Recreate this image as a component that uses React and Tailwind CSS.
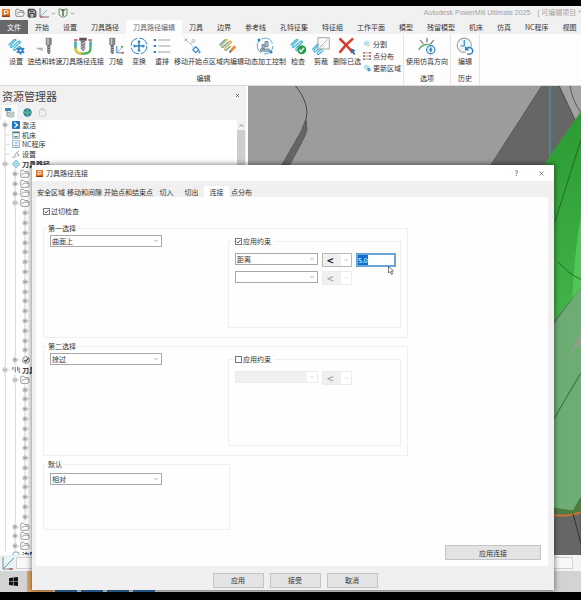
import { useEffect, useRef } from "react";
import { ChevronDown, ChevronUp, Clipboard, FolderOpen, Save, X } from "lucide-react";

const TABS = [
  "开始", "设置", "刀具路径", "刀具路径编辑", "刀具", "边界", "参考线", "孔特征集",
  "特征组", "工作平面", "模型", "残留模型", "机床", "仿真", "NC程序", "视图",
];

const DIALOG_TABS = ["安全区域", "移动和间隙", "开始点和结束点", "切入", "切出", "连接", "点分布"];

const leaves = (count) => Array.from({ length: count }, () => ({ level: 2, node: "plus" }));
const folders = (count) => Array.from({ length: count }, () => ({ level: 1, node: "plus", icon: "folder" }));

const TREE = [
  { level: 0, node: "plus", icon: "active", label: "激活" },
  { level: 0, icon: "machine", label: "机床" },
  { level: 0, icon: "nc", label: "NC程序" },
  { level: 0, icon: "setup", label: "设置" },
  { level: 0, node: "minus", icon: "path", label: "刀具路径", bold: true },
  ...folders(3),
  { level: 1, node: "minus", icon: "folder" },
  ...leaves(15),
  { level: 1, node: "plus", icon: "check" },
  { level: 0, node: "minus", icon: "tool", label: "刀具", bold: true },
  { level: 1, node: "minus", icon: "folder" },
  ...leaves(14),
  ...folders(3),
];

function Logo({ className }) {
  return (
    <svg viewBox="0 0 16 16" className={className}>
      <rect width="16" height="16" rx="2" fill="#e8761e" />
      <path d="M0 13h16v1a2 2 0 0 1-2 2H2a2 2 0 0 1-2-2z" fill="#8a3d0c" />
      <path d="M5 12V3h4a3 3 0 0 1 0 6H6" fill="none" stroke="#fff" strokeWidth="2" />
    </svg>
  );
}

function Zigzag({ color = "#45b5d6" }) {
  return (
    <path
      d="M2 11 9 4q2-2 3 0L5 11q-1 3 1 3l9-8q2-1 3 1l-8 7q-2 3 0 4l7-6"
      fill="none"
      stroke={color}
      strokeWidth="1.6"
    />
  );
}

function Cutter({ x = 12 }) {
  return (
    <g transform={`translate(${x} 0)`}>
      <rect x="0" y="1" width="8" height="10" rx="1" fill="#858585" />
      <rect x="2" y="2" width="2" height="8" fill="#c9c9c9" />
      <path d="M2 11h4v10l-2 2-2-2z" fill="#555" />
      <path d="m2 15 4-2M2 18l4-2M2 21l4-2" stroke="#ddd" strokeWidth="1" />
    </g>
  );
}

function Gear({ x, y }) {
  return (
    <g transform={`translate(${x} ${y})`}>
      <circle r="4" fill="#2b82c4" />
      <path d="M0-5.500V5.500M-5 -3 5 3M-5 3 5-3" stroke="#2b82c4" strokeWidth="2" />
      <circle r="1.500" fill="#fff" />
    </g>
  );
}

const RIBBON_ICONS = {
  setup: <><Zigzag /><Gear x={18} y={18} /></>,
  feed: <><path d="M0 15h9v4z" fill="#bbb" /><path d="M1 15h8" stroke="#999" /><Cutter x={13} /></>,
  link: (
    <>
      <path d="M2 6v9q0 7 8 7h4q8 0 8-7V6" fill="none" stroke="#4cae57" strokeWidth="3" />
      <path d="M2 6v7" stroke="#3fb0dc" strokeWidth="3" />
      <path d="M2 15q1 7 8 7" fill="none" stroke="#e7c838" strokeWidth="3" />
      <path d="M22 6v6" stroke="#3fb0dc" strokeWidth="3" />
      <path d="M0 4h5M19 4h5" stroke="#d54a3c" strokeWidth="2" />
      <rect x="7" y="1" width="10" height="4" fill="#555" />
      <path d="M9 5h6v11l-3 3-3-3z" fill="#777" />
      <path d="m9 10 6-3M9 14l6-3M10 17l5-3" stroke="#eee" />
    </>
  ),
  axis: (
    <>
      <Cutter x={3} />
      <path d="M13 12v9h8" fill="none" stroke="#4496d0" strokeWidth="1.500" />
      <path d="m13 21 7-7" stroke="#888" />
      <circle cx="21" cy="21" r="1.500" fill="#d54a3c" />
      <circle cx="20" cy="13" r="1.500" fill="#4cae57" />
    </>
  ),
  transform: (
    <>
      <circle cx="12" cy="12" r="10.500" fill="none" stroke="#2c83c0" strokeWidth="1.300" strokeDasharray="14 2.500" />
      <path d="M12 5v14M5 12h14" stroke="#2c83c0" strokeWidth="2" />
      <path d="m9.500 7 2.500-3 2.500 3zM9.500 17l2.500 3 2.500-3zM7 9.500 4 12l3 2.500zM17 9.500l3 2.500-3 2.500z" fill="#2c83c0" />
    </>
  ),
  reorder: (
    <>
      <path d="M7 4h16M7 12h16M7 20h16" stroke="#8d96a0" strokeWidth="1.200" />
      <path d="M1 4h3M1 12h3M1 20h3" stroke="#2c83c0" strokeWidth="2.500" />
    </>
  ),
  move: (
    <>
      <path d="M3 4l7 5 4-3M10 9l7 9" fill="none" stroke="#999" strokeDasharray="2 1" />
      <path d="M2 2l4 4M6 2 2 6" stroke="#aaa" strokeWidth="1.300" />
      <circle cx="14" cy="5" r="2" fill="none" stroke="#aaa" />
      <path d="M17 13l4 4-4 4-4-4z" fill="#fff" stroke="#2c83c0" strokeWidth="1.500" />
      <path d="M20 20h4M22 18v4" stroke="#2c83c0" />
    </>
  ),
  region: (
    <>
      <Zigzag color="#efa637" />
      <path d="M2 11 9 4M6 14l8-7M10 18l6-5" stroke="#45b5d6" strokeWidth="1.600" />
      <path d="m15 21 1-4 6-6 2 3-6 6z" fill="#e8863a" />
      <path d="m15 21 1-3 2 2z" fill="#444" />
    </>
  ),
  dynamic: (
    <>
      <circle cx="12" cy="12" r="10.500" fill="none" stroke="#5aa9cf" strokeWidth="1.300" strokeDasharray="18 4" />
      <path d="M6 16h12v3H6zM8 10h3v6H8zM12 6h4v7h-4z" fill="#9cc3d5" stroke="#59737f" />
      <circle cx="4" cy="4" r="2" fill="#2c83c0" />
      <circle cx="20" cy="20" r="2" fill="#2c83c0" />
    </>
  ),
  check: (
    <>
      <Zigzag />
      <circle cx="17" cy="17" r="6" fill="#2f9b50" />
      <path d="m14 17 2 2.500 4-5" fill="none" stroke="#fff" strokeWidth="1.700" />
    </>
  ),
  trim: (
    <>
      <g transform="translate(-2 6)"><Zigzag /></g>
      <rect x="8" y="1" width="15" height="15" fill="#f8f8f8" fillOpacity=".8" stroke="#8a8a8a" />
      <path d="m10 14 11-11" stroke="#aaa" />
    </>
  ),
  remove: (
    <>
      <path d="M2 2q9 8 18 19M20 2Q9 11 2 21" fill="none" stroke="#d63c2d" strokeWidth="3.200" />
      <path d="m17 15 7 3-3 1 2 4-2 1-2-4-2 2z" fill="#2c6fae" />
    </>
  ),
  simulate: (
    <>
      <path d="M12 1v6M3 4l4 5M21 4l-4 5" stroke="#666" strokeWidth="1.500" />
      <path d="M1 17q4-7 11-7" fill="none" stroke="#4cae57" strokeWidth="2" />
      <path d="M12 10l7-1" stroke="#666" />
      <circle cx="17" cy="17" r="5.500" fill="#e9f4fb" stroke="#2c83c0" strokeWidth="1.500" />
      <path d="m17 13 2 4-2 4-2-4z" fill="#2c83c0" />
    </>
  ),
  history: (
    <>
      <circle cx="11" cy="11" r="9.500" fill="#eef6fb" stroke="#9ea6ac" strokeWidth="1.500" />
      <path d="M11 4v8H6" fill="none" stroke="#2c83c0" strokeWidth="1.500" />
      <circle cx="18" cy="18" r="5.500" fill="#fff" />
      <path d="M14 16a4.500 4.500 0 1 1 1 6M13 13v4h4" fill="none" stroke="#2c83c0" strokeWidth="2" />
    </>
  ),
};

const EDIT_TOOLS = [
  { icon: "setup", label: "设置", width: "w-6" },
  { icon: "feed", label: "进给和转速", width: "w-[34px]" },
  { icon: "link", label: "刀具路径连接", width: "w-[42px]" },
  { icon: "axis", label: "刀轴", width: "w-6" },
  { icon: "transform", label: "变换", width: "w-[22px]" },
  { icon: "reorder", label: "重排", width: "w-6" },
  { icon: "move", label: "移动开始点", width: "w-[35px]" },
  { icon: "region", label: "区域内编辑", width: "w-[35px]" },
  { icon: "dynamic", label: "动态加工控制", width: "w-[42px]" },
  { icon: "check", label: "检查", width: "w-6" },
  { icon: "trim", label: "剪裁", width: "w-[22px]" },
  { icon: "remove", label: "删除已选", width: "w-[30px]" },
];

function ToolButton({ icon, label, width }) {
  return (
    <button className={`flex shrink-0 flex-col items-center gap-0.5 ${width}`}>
      <svg viewBox="0 0 24 24" className="size-[18px]">{RIBBON_ICONS[icon]}</svg>
      <span className="whitespace-nowrap">{label}</span>
    </button>
  );
}

function RibbonGroup({ title, children, className = "" }) {
  return (
    <section className={`flex flex-col items-center justify-between border-r border-[#e6e6e6] pt-[3px] pb-[3px] ${className}`}>
      <div className="flex">{children}</div>
      <h2>{title}</h2>
    </section>
  );
}

function TitleBar() {
  return (
    <header className="flex h-3.5 shrink-0 items-center gap-0.5 overflow-hidden bg-[#f1f1f1] pl-0.5">
      <Logo className="mr-[3px] size-2 shrink-0" />
      <FolderOpen className="size-[10px] text-[#777]" strokeWidth={2} />
      <Save className="size-[10px] fill-[#c8c8c8] text-[#444]" strokeWidth={3} />
      <svg viewBox="0 0 10 10" className="size-[10px]" fill="none">
        <path d="M1 0v9h9" stroke="#777" />
        <path d="m1 9 7-7" stroke="#79bcd0" />
        <path d="M1 9h3" stroke="#d54a3c" />
      </svg>
      <ChevronDown className="size-[5px] text-[#666]" strokeWidth={3} />
      <svg viewBox="0 0 10 10" className="size-[10px]" fill="none">
        <path d="M3 1H1v6l3 2h2l3-2V1H7" stroke="#4ca75c" />
        <path d="M5 1v7M3 2h4" stroke="#666" strokeWidth="1.500" />
      </svg>
      <ChevronDown className="size-[5px] text-[#666]" strokeWidth={3} />
      <h1 className="ml-auto flex gap-[7px] whitespace-pre font-['Liberation_Sans','Noto_Sans_CJK_SC',sans-serif] text-[#a2a2a2]">
        <span>Autodesk PowerMill Ultimate 2025</span>
        <span>[ 可编辑项目 *</span>
      </h1>
    </header>
  );
}

function Ribbon() {
  return (
    <>
      <nav className="flex h-3.5 shrink-0 overflow-hidden bg-[#f1f1f1]">
        <button className="shrink-0 bg-[#686868] px-[7px] text-white">文件</button>
        {TABS.map((tab) => (
          <button
            key={tab}
            className={`shrink-0 px-[7px] whitespace-nowrap ${tab === "刀具路径编辑" ? "bg-[#fdfdfd] text-[#666]" : ""}`}
          >
            {tab}
          </button>
        ))}
      </nav>
      <div className="flex h-[52px] shrink-0 border-b border-[#dadada] bg-[#fdfdfd]">
        <RibbonGroup title="编辑" className="pl-1">
          {EDIT_TOOLS.map((tool) => (
            <ToolButton key={tool.label} {...tool} />
          ))}
          <div className="flex w-[41px] flex-col gap-1 pt-[3px] pl-px">
            <button className="flex h-2 items-center gap-0.5 whitespace-nowrap">
              <svg viewBox="0 0 24 24" className="size-2"><Zigzag /><path d="m14 20 8-8" stroke="#efa637" strokeWidth="3" /></svg>
              分割
            </button>
            <button className="flex h-2 items-center gap-0.5 whitespace-nowrap">
              <svg viewBox="0 0 9 9" className="size-2">
                <path d="M0 1h9M0 4.500h9M0 8h9" stroke="#888" strokeWidth=".8" />
                <path d="M0 1h2M7 1h2M0 4.500h2M7 4.500h2M0 8h2M7 8h2" stroke="#b8524a" strokeWidth="1.500" />
              </svg>
              点分布
            </button>
            <button className="flex h-2 items-center gap-0.5 whitespace-nowrap">
              <svg viewBox="0 0 24 24" className="size-2"><Zigzag /><Gear x={18} y={17} /></svg>
              更新区域
            </button>
          </div>
        </RibbonGroup>
        <RibbonGroup title="选项" className="px-0.5">
          <ToolButton icon="simulate" label="使用仿真方向" width="w-[42px]" />
        </RibbonGroup>
        <RibbonGroup title="历史">
          <ToolButton icon="history" label="编辑" width="w-7" />
        </RibbonGroup>
      </div>
    </>
  );
}

const TREE_ICONS = {
  active: <><rect width="10" height="10" rx="1" fill="#2277bd" /><path d="m3 2 4 3-4 3" fill="none" stroke="#fff" strokeWidth="1.500" /></>,
  machine: <><rect x="1" y="1" width="8" height="8" fill="#eef7f7" stroke="#6d8f95" /><path d="M1 2h8M3 7h4" stroke="#4c7f86" strokeWidth="1.500" /></>,
  nc: <><rect x="1" y="0" width="8" height="9.500" fill="#eef5fa" stroke="#7e97a8" /><path d="M5 2v3M3 7h4" stroke="#4b90bf" /></>,
  setup: <path d="M0 9h4V5M4 5l5-4M6 3l3 5M6 8l3-3" fill="none" stroke="#999" />,
  path: <path d="m5 0 5 5-5 5-5-5z" fill="#a8dbe6" stroke="#79bccb" />,
  tool: <path d="M1 1v4M4 1v7M7 1v5M9 2v7" stroke="#777" strokeWidth="1.300" />,
  check: <><circle cx="5" cy="5" r="4.300" fill="#eee" stroke="#777" /><path d="m2.500 5 2 2L8 2.500" fill="none" stroke="#333" strokeWidth="1.300" /></>,
};

function TreeNode({ node }) {
  return (
    <svg viewBox="0 0 10 10" className="h-full w-[10px] shrink-0 overflow-visible" fill="none">
      <path d="M5-1V11M5 5h5" stroke="#dcdcdc" />
      {node && <circle cx="5" cy="5" r="2.200" fill="#f4f4f4" stroke="#bbb" />}
      {node && <path d={node === "plus" ? "M3.500 5h3M5 3.500v3" : "M3.500 5h3"} stroke="#888" />}
    </svg>
  );
}

function TreeRow({ level, node, icon, label, bold }) {
  return (
    <li className="flex min-h-0 flex-1 items-center">
      {Array.from({ length: level }, (_, i) => (
        <span key={i} className="flex h-full w-[10px] shrink-0 justify-center">
          <span className="w-px bg-[#dcdcdc]" />
        </span>
      ))}
      <TreeNode node={node} />
      {icon === "folder" && <FolderOpen className="size-[10px] shrink-0 text-[#888]" strokeWidth={2} />}
      {icon && icon !== "folder" && (
        <svg viewBox="0 0 10 10" className="mx-0.5 size-2 shrink-0">{TREE_ICONS[icon]}</svg>
      )}
      <span className={bold ? "font-bold" : ""}>{label}</span>
    </li>
  );
}

function Explorer() {
  return (
    <aside className="flex w-[248px] shrink-0 flex-col border-r-2 border-white bg-[#f1f1f1]">
      <div className="flex h-[19px] shrink-0 items-center justify-between pr-1.5 pl-0.5">
        <h2 className="text-[11px] leading-[14px] text-[#444]">资源管理器</h2>
        <button aria-label="关闭"><X className="size-[5px]" strokeWidth={3} /></button>
      </div>
      <div className="flex h-[15px] shrink-0 items-center gap-1.5 pl-0.5">
        <button className="flex h-full w-[15px] items-center justify-center bg-white" aria-label="树">
          <svg viewBox="0 0 10 10" className="size-[10px]">
            <path d="M0 0h6v3H0z" fill="#3a86bd" />
            <path d="M2 3v5h2M2 5h2" fill="none" stroke="#888" />
            <path d="M4 4h5v2H4zM4 7h5v2H4z" fill="#dde5ea" stroke="#899" strokeWidth=".6" />
          </svg>
        </button>
        <button aria-label="网页">
          <svg viewBox="0 0 10 10" className="size-[9px]">
            <circle cx="5" cy="5" r="4.700" fill="#2f7fa4" />
            <path d="M5 1v8M1 5h8" stroke="#57b58b" strokeWidth="2" />
          </svg>
        </button>
        <button aria-label="剪贴板"><Clipboard className="size-[9px] text-[#c4c4c4]" /></button>
      </div>
      <div className="flex min-h-0 flex-1 bg-white">
        <ul className="flex min-w-0 flex-1 flex-col overflow-hidden">
          {TREE.map((row, i) => (
            <TreeRow key={i} {...row} />
          ))}
          <li className="flex h-1 shrink-0 items-start overflow-hidden pl-3 font-bold">
            <svg viewBox="0 0 10 10" className="mr-0.5 size-2 shrink-0"><circle cx="5" cy="5" r="4" fill="none" stroke="#4a90b8" /></svg>
            边界
          </li>
        </ul>
        <div className="flex w-[9px] flex-col bg-[#f1f1f1]">
          <div className="flex h-[10px] items-center justify-center"><ChevronUp className="size-[7px]" /></div>
          <div className="w-2 flex-1 bg-[#cdcdcd]" />
        </div>
      </div>
    </aside>
  );
}

function Viewport() {
  return (
    <svg viewBox="0 0 333 470" preserveAspectRatio="xMaxYMid slice" className="h-full min-w-0 flex-1 bg-[#9c9c9b]">
      <defs>
        <linearGradient id="bright" x1="0" y1="0" x2="0" y2="1">
          <stop offset="0" stopColor="#2d9a33" />
          <stop offset="1" stopColor="#43b54a" />
        </linearGradient>
      </defs>
      <path d="M47 0C54 8 59 18 59 28l-1 5" fill="none" stroke="#444" />
      <path d="M58 33l1 11c-2 8-7 16-17 35h-8l19-33z" fill="#656565" stroke="#444" strokeWidth=".6" />
      <path d="M294 0h17l22 47v423h-50V90h-47z" fill="#666" stroke="#444" strokeWidth=".6" />
      <path d="M311 0h22v47z" fill="#a3a3a3" />
      <path d="M311 0l22 47M322 0q2 15 11 27" fill="none" stroke="#444" strokeWidth=".8" />
      <path d="M302 0v80" stroke="#4a8f9b" strokeWidth="1.500" />
      <path d="M333 26l-8 11-27 39v170l35-44z" fill="url(#bright)" />
      <path d="M333 130v72l-9 11q3-50 9-83z" fill="#55c25a" />
      <path d="M298 249l35-47v210l-8 14-27-4z" fill="#6dad74" />
      <path d="M333 245l-12 25 12-12z" fill="#8e9f8e" />
      <path d="M333 54l-26 82M310 176q10 12 23 18M333 287l-31 53M325 426l8-14" fill="none" stroke="#1d5c25" strokeWidth=".8" />
      <path d="M298 421l27 4 8-13v14q-15 5-35 0z" fill="#4c7d3f" />
      <path d="M298 428q18 5 35-1" fill="none" stroke="#b5763a" strokeWidth="2.500" />
      <path d="M325 428l8 30" stroke="#333" />
    </svg>
  );
}

function Dropdown({ label, value, disabled, className }) {
  return (
    <div className={`relative h-3 border ${disabled ? "border-[#ececec]" : "border-[#a8a8a8]"} ${className}`}>
      <select
        aria-label={label}
        disabled={disabled}
        className={`block h-full w-full appearance-none pl-px leading-[10px] ${disabled ? "bg-[#f0f0f0]" : "bg-white"}`}
      >
        <option>{value}</option>
      </select>
      <span className="pointer-events-none absolute inset-y-0 right-0 flex w-[10px] items-center justify-center bg-white">
        <ChevronDown className={`size-1.5 ${disabled ? "text-[#bbb]" : "text-[#666]"}`} />
      </span>
    </div>
  );
}

function Operator({ disabled }) {
  return (
    <div className={`relative h-3.5 w-[30px] border ${disabled ? "border-[#ececec]" : "border-[#b8b8b8]"}`}>
      <select
        aria-label="比较"
        disabled={disabled}
        className={`block h-full w-full appearance-none bg-[#f0f0f0] pl-1 text-[11px] leading-3 font-bold opacity-100 ${disabled ? "text-[#aaa]" : "text-[#222]"}`}
      >
        <option>&lt;</option>
        <option>&gt;</option>
      </select>
      <span className="pointer-events-none absolute inset-y-0 right-0 flex w-[10px] items-center justify-center bg-white">
        <ChevronDown className={`size-1.5 ${disabled ? "text-[#ccc]" : "text-[#888]"}`} />
      </span>
    </div>
  );
}

function CheckBox({ label, checked }) {
  return (
    <label className="flex items-center gap-px">
      <span className="relative size-[7px]">
        <input type="checkbox" defaultChecked={checked} className="peer block size-[7px] appearance-none border border-[#777] bg-white" />
        <svg viewBox="0 0 7 7" className="pointer-events-none absolute inset-0 hidden peer-checked:block">
          <path d="m1.500 3.500 1.500 1.500 2.500-3" fill="none" stroke="#333" strokeWidth=".8" />
        </svg>
      </span>
      {label}
    </label>
  );
}

function ChoiceGroup({ title, value, constrained, children }) {
  return (
    <fieldset className="w-[365px] border border-[#efefef] px-[3px] pb-[9px]">
      <legend className="h-2 px-px">{title}</legend>
      <div className="flex items-start justify-between px-[3px] pt-[3px]">
        <Dropdown label={title} value={value} className="w-28" />
        <fieldset className="mt-0.5 h-[91px] w-[173px] border border-[#efefef] pr-1 pl-1.5">
          <legend className="h-2 pr-1"><CheckBox label="应用约束" checked={constrained} /></legend>
          <div className="flex flex-col gap-1 pt-2">{children}</div>
        </fieldset>
      </div>
    </fieldset>
  );
}

function LinkDialog() {
  const distance = useRef(null);

  useEffect(() => {
    distance.current.focus();
    distance.current.select();
  }, []);

  return (
    <div role="dialog" className="absolute top-[159px] right-[27px] bottom-0.5 left-8 flex flex-col bg-[#f0f0f0] shadow-[0_0_5px_1px_rgba(0,0,0,0.45)]">
      <div className="flex h-4 shrink-0 items-center bg-white pr-[9px] pl-1">
        <Logo className="mr-[3px] size-[7px]" />
        <h2>刀具路径连接</h2>
        <button className="mr-5 ml-auto" aria-label="帮助">?</button>
        <button aria-label="关闭"><X className="size-[7px]" /></button>
      </div>
      <div role="tablist" className="flex h-4 shrink-0 items-end px-1">
        {DIALOG_TABS.map((tab) => (
          <button
            key={tab}
            role="tab"
            className={`h-[11px] min-w-[25px] px-px whitespace-nowrap ${tab === "连接" ? "bg-white" : ""}`}
          >
            {tab}
          </button>
        ))}
      </div>
      <div className="mr-1.5 ml-1 flex min-h-0 flex-1 flex-col items-start gap-1 bg-[#fefefe] px-[7px] pt-[10px] pb-1.5">
        <div className="mb-[5px] h-2"><CheckBox label="过切检查" checked /></div>
        <ChoiceGroup title="第一选择" value="曲面上" constrained>
          <div className="flex gap-1">
            <Dropdown label="约束类型" value="距离" className="w-[83px]" />
            <Operator />
            <input
              ref={distance}
              aria-label="距离值"
              defaultValue="5.0"
              className="h-3.5 w-10 border-2 border-[#6aa5d8] bg-white leading-[10px] outline-none selection:bg-[#1273cf] selection:text-white"
            />
          </div>
          <div className="flex gap-1">
            <Dropdown label="约束类型" value="" className="w-[83px]" />
            <Operator disabled />
          </div>
        </ChoiceGroup>
        <ChoiceGroup title="第二选择" value="掠过">
          <div className="flex gap-1">
            <Dropdown label="约束类型" value="" disabled className="w-[83px]" />
            <Operator disabled />
          </div>
        </ChoiceGroup>
        <fieldset className="h-[70px] w-[187px] border border-[#efefef] px-[3px]">
          <legend className="h-2 px-px">默认</legend>
          <div className="px-[3px] pt-[5px]">
            <Dropdown label="默认" value="相对" className="w-28" />
          </div>
        </fieldset>
        <button className="mt-auto h-[15px] w-24 self-end border border-[#c4c4c4] bg-[#e3e3e3]">应用连接</button>
      </div>
      <div className="flex h-6 shrink-0 items-center justify-center gap-1.5 pt-1 pl-1">
        {["应用", "接受", "取消"].map((name) => (
          <button key={name} className="h-[15px] w-[51px] border border-[#c4c4c4] bg-[#e3e3e3]">{name}</button>
        ))}
      </div>
      <svg viewBox="0 0 12 18" className="pointer-events-none absolute top-[101px] left-[356px] h-[9px] w-1.5">
        <path d="M1 1v13l3-3 3 6 2-1-2-6h4z" fill="#fff" stroke="#333" strokeWidth="1.300" />
      </svg>
    </div>
  );
}

export default function App() {
  return (
    <div className="relative flex h-screen flex-col overflow-hidden border-t-[6px] border-b-8 border-black bg-[#f1f1f1] font-['Noto_Sans_CJK_SC',sans-serif] text-[7px] leading-2 text-[#333]">
      <TitleBar />
      <Ribbon />
      <main className="flex min-h-0 flex-1">
        <Explorer />
        <Viewport />
      </main>
      <div className="flex h-4 shrink-0 items-center justify-between bg-[#f3f3f3] pr-2">
        <svg viewBox="0 0 16 16" className="size-4 bg-[#e9f3f6]" fill="none">
          <path d="M3 2v12h10" stroke="#888" />
          <path d="M3 14 14 3" stroke="#5c9fb5" />
          <path d="M9 14h4" stroke="#c0392b" />
        </svg>
        <div className="h-3 flex-1 border border-[#d2d2d2] bg-[#f8f8f8]" />
      </div>
      <footer className="flex h-[21px] shrink-0 bg-[#d3d3d3]">
        <button className="flex w-[27px] items-center justify-center" aria-label="开始">
          <svg viewBox="0 0 16 16" className="size-[9px]" fill="#111">
            <path d="M0 2l7-1v6.500H0zM8 1l8-1v7.500H8zM0 8.500h7V15l-7-1zM8 8.500h8V16l-8-1z" />
          </svg>
        </button>
        <span className="w-[26px] bg-[#e6a466]" />
        <div className="flex items-end gap-1 pl-0.5">
          <span className="h-0.5 w-[22px] bg-[#2f6aa3]" />
          <span className="h-0.5 w-[22px] bg-[#2f6aa3]" />
          <span className="h-0.5 w-[22px] bg-[#2f6aa3]" />
          <span className="h-0.5 w-[22px] bg-[#2f6aa3]" />
        </div>
      </footer>
      <LinkDialog />
    </div>
  );
}
